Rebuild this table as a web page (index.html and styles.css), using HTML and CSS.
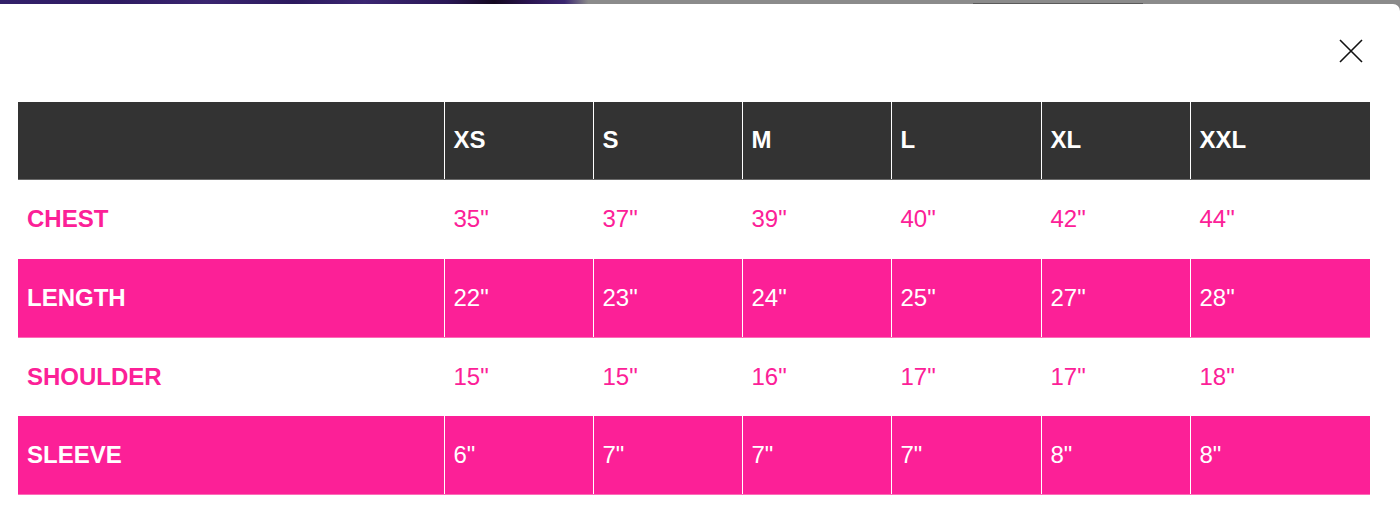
FILE: index.html
```html
<!DOCTYPE html>
<html lang="en">
<head>
<meta charset="utf-8">
<title>Size Chart</title>
<link rel="stylesheet" href="styles.css">
</head>
<body>
<div class="backdrop">
  <div class="backdrop-photo"></div>
  <div class="backdrop-page"></div>
</div>
<div class="modal">
  <div class="modal-head">
    <button class="close" aria-label="Close">
      <svg width="24" height="24" viewBox="0 0 24 24"><path d="M1 1L23 23M23 1L1 23" stroke="#111" stroke-width="1.6" fill="none"/></svg>
    </button>
  </div>
  <div class="modal-body">
    <table class="chart">
      <colgroup>
        <col class="c-label"><col class="c-size"><col class="c-size"><col class="c-size"><col class="c-size4"><col class="c-size"><col class="c-last">
      </colgroup>
      <thead>
        <tr class="row-head"><th></th><th>XS</th><th>S</th><th>M</th><th>L</th><th>XL</th><th>XXL</th></tr>
      </thead>
      <tbody>
        <tr class="row-light r1"><th>CHEST</th><td>35"</td><td>37"</td><td>39"</td><td>40"</td><td>42"</td><td>44"</td></tr>
        <tr class="row-pink r2"><th>LENGTH</th><td>22"</td><td>23"</td><td>24"</td><td>25"</td><td>27"</td><td>28"</td></tr>
        <tr class="row-light r3"><th>SHOULDER</th><td>15"</td><td>15"</td><td>16"</td><td>17"</td><td>17"</td><td>18"</td></tr>
        <tr class="row-pink r4"><th>SLEEVE</th><td>6"</td><td>7"</td><td>7"</td><td>7"</td><td>8"</td><td>8"</td></tr>
      </tbody>
    </table>
  </div>
</div>
</body>
</html>
```
FILE: styles.css
```css
html, body {
  margin: 0;
  padding: 0;
}
body {
  background: #8a8a8a;
  font-family: "Liberation Sans", Arial, sans-serif;
  width: 1400px;
  height: 516px;
  overflow: hidden;
}
.backdrop {
  display: flex;
  height: 4px;
}
.backdrop-photo {
  width: 588px;
  background: linear-gradient(90deg, #33206a 0%, #2e1b62 20%, #3a2570 35%, #2c1a5e 50%, #3b2672 62%, #2a1756 76%, #14081f 84%, #2a1450 90%, #3a2670 96%, #8a8a8a 100%);
}
.backdrop-page {
  flex: 1;
  background:
    linear-gradient(90deg, transparent 385px, #5a5a5a 385px, #5a5a5a 555px, transparent 555px) bottom / 100% 1px no-repeat,
    #8b8b8b;
}
.modal {
  background: #fff;
  border-top-right-radius: 7px;
  height: 512px;
}
.modal-head {
  display: flex;
  justify-content: flex-end;
  height: 98px;
  padding: 35px 37px 0 0;
  box-sizing: border-box;
}
.close {
  width: 24px;
  height: 24px;
  padding: 0;
  border: 0;
  background: none;
  display: flex;
  align-items: center;
  justify-content: center;
}
.modal-body {
  padding: 0 30px 0 18px;
}
.chart {
  width: 1352px;
  table-layout: fixed;
  border-collapse: collapse;
  font-size: 24px;
}
.c-label { width: 426px; }
.c-size { width: 149px; }
.c-size4 { width: 150px; }
.c-last { width: 180px; }
.chart th, .chart td {
  padding: 0 9px;
  text-align: left;
  vertical-align: middle;
  border-left: 1px solid #fff;
  line-height: 28px;
}
.chart th:first-child {
  border-left: 0;
}
.chart th { font-weight: 700; }
.chart td { font-weight: 400; }
.row-head { height: 77px; }
.r1 { height: 80px; }
.r2 { height: 78px; }
.r3 { height: 79px; }
.r4 { height: 78px; }
.row-head th {
  background: #333;
  color: #fff;
  border-bottom: 1px solid #6a6a6a;
}
.row-light th, .row-light td {
  background: #fff;
  color: #fc2097;
}
.row-pink th, .row-pink td {
  background: #fc2097;
  color: #fff;
  border-bottom: 1px solid #fd6cb8;
}
```
